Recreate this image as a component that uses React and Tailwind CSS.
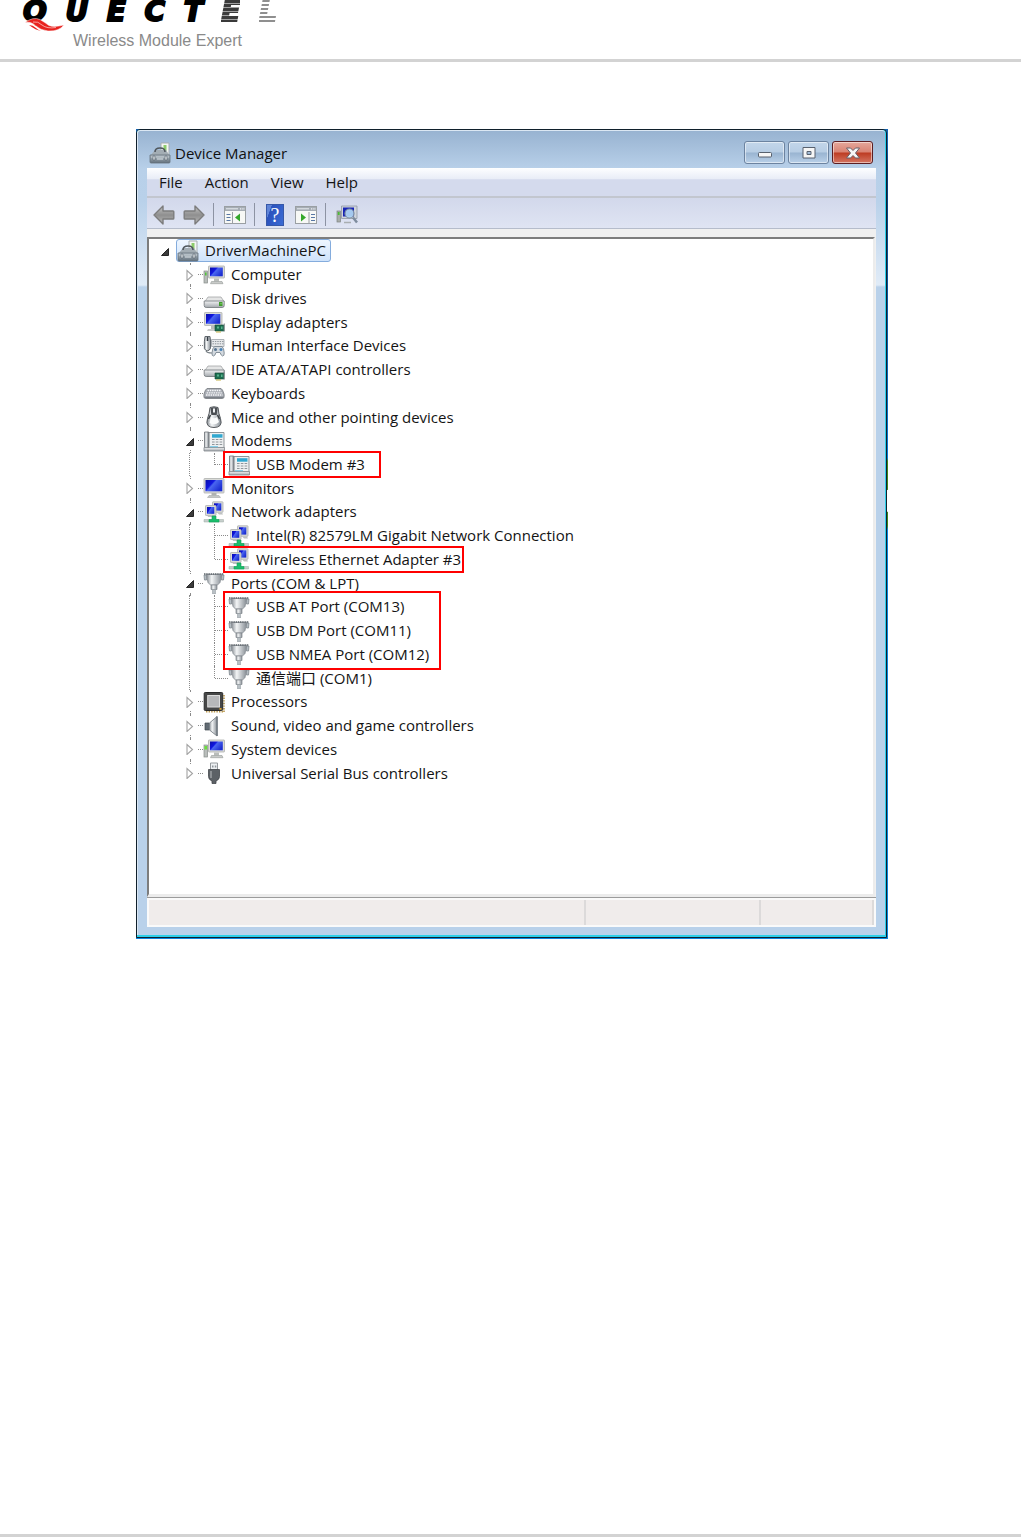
import React from "react";

const Svg = ({ children, className = "size-[22px]" }) => (
  <svg viewBox="0 0 22 22" className={`${className} shrink-0`} aria-hidden="true">
    {children}
  </svg>
);

/* Gradients that the icons share */
const Defs = () => (
  <svg className="absolute size-0" aria-hidden="true">
    <defs>
      <linearGradient id="screen" x1="0" y1="0" x2="1" y2="0.6">
        <stop offset="0" stopColor="#0a10a8" />
        <stop offset="0.4" stopColor="#1016e0" />
        <stop offset="0.5" stopColor="#4a66f0" />
        <stop offset="1" stopColor="#1c2ed2" />
      </linearGradient>
      <linearGradient id="metal" x1="0" y1="0" x2="0" y2="1">
        <stop offset="0" stopColor="#f2f3f4" />
        <stop offset="1" stopColor="#a3a8ad" />
      </linearGradient>
      <linearGradient id="steel" x1="0" y1="0" x2="1" y2="0">
        <stop offset="0" stopColor="#8b9197" />
        <stop offset="0.35" stopColor="#f3f5f6" />
        <stop offset="1" stopColor="#878e95" />
      </linearGradient>
      <linearGradient id="box" x1="0" y1="0" x2="0" y2="1">
        <stop offset="0" stopColor="#b4bec6" />
        <stop offset="1" stopColor="#63717c" />
      </linearGradient>
      <linearGradient id="arrow" x1="0" y1="0" x2="0" y2="1">
        <stop offset="0" stopColor="#c4c4c4" />
        <stop offset="0.5" stopColor="#8f8f8f" />
        <stop offset="1" stopColor="#b8b8b8" />
      </linearGradient>
    </defs>
  </svg>
);

const Toolbox = () => (
  <Svg>
    <path d="M12 1h8v12h-8z" fill="#f4f6f4" stroke="#a7adb0" />
    <path d="M14.5 3h3v6h-3z" fill="#8dcc6b" />
    <path d="M1 14l5-6h11l4 6z" fill="#a3adb4" />
    <path d="M6 10q0-4 5-4t5 4" fill="none" stroke="#50575d" strokeWidth="1.6" />
    <path d="M1 13h20v7q0 1-1 1H2q-1 0-1-1z" fill="url(#box)" stroke="#66727b" strokeWidth=".8" />
    <path d="M2 15h18" stroke="#c3ccd2" />
    <path d="M4 14h2v4H4zM16 14h2v4h-2z" fill="#dfe4e7" stroke="#59636b" strokeWidth=".6" />
    <path d="M8 17h6" stroke="#dbe2e6" />
  </Svg>
);

const Screen = ({ x = 6, y = 2, w = 15, h = 12 }) => (
  <g>
    <rect x={x} y={y} width={w} height={h} rx=".6" fill="#d9dbd8" stroke="#aeb0af" strokeWidth=".8" />
    <rect x={x + 1.5} y={y + 1.5} width={w - 3.2} height={h - 3.2} fill="url(#screen)" />
  </g>
);

const Computer = () => (
  <Svg>
    <rect x="1" y="7" width="3.6" height="12" fill="#b9bdbb" stroke="#888e8b" strokeWidth=".7" />
    <path d="M2 8.5h1.6v3H2z" fill="#54c33c" />
    <Screen x={5.5} y={2} w={16} h={12} />
    <path d="M11 14.5h5v3h-5z" fill="#babdba" />
    <path d="M8.5 17.5h10.5l1 2.2H7.5z" fill="#c9cbc9" stroke="#969b99" strokeWidth=".6" />
  </Svg>
);

const SystemDevice = () => (
  <Svg>
    <rect x="1" y="7" width="3.6" height="12" fill="#b9bdbb" stroke="#888e8b" strokeWidth=".7" />
    <path d="M1.5 8h2.6v3.5H1.5z" fill="#6be03c" />
    <Screen x={5.5} y={2} w={16} h={12} />
    <path d="M11 14.5h5v3h-5z" fill="#babdba" />
    <path d="M8.5 17.5h10.5l1 2.2H7.5z" fill="#c9cbc9" stroke="#969b99" strokeWidth=".6" />
  </Svg>
);

const DriveBody = () => (
  <g>
    <path d="M2 13.5L5 9h13l3 4.5z" fill="#e4e5e5" stroke="#a3a6a7" strokeWidth=".8" />
    <path d="M1.2 13h20v4.500q0 2-2 2h-16q-2 0-2-2z" fill="url(#metal)" stroke="#7b8083" strokeWidth=".9" />
  </g>
);
const Card = () => (
  <g>
    <path d="M12 14h9v6h-9z" fill="#1c6e50" stroke="#104833" strokeWidth=".6" />
    <path d="M14 15.5h2v2h-2zM18 15.5h1.5v2.5H18z" fill="#58b38c" />
    <path d="M13 21h5" stroke="#c8b44a" />
    <path d="M21.3 12.5v8" stroke="#8e9698" strokeWidth="1.2" />
  </g>
);
const Disk = () => (
  <Svg>
    <g transform="translate(0 1)">
      <DriveBody />
      <path d="M16 14h3.500v4H16z" fill="#3f9c2c" />
      <path d="M17.500 15.200h1v1h-1z" fill="#b6f09a" />
    </g>
  </Svg>
);
const Ide = () => (
  <Svg>
    <g transform="translate(0 -2)">
      <DriveBody />
    </g>
    <Card />
  </Svg>
);
const Display = () => (
  <Svg>
    <Screen x={1.5} y={1.5} w={17.5} h={13} />
    <path d="M8 15h5v3H8z" fill="#babdba" />
    <path d="M5 18h9v2H4z" fill="#c9cbc9" />
    <Card />
  </Svg>
);
const Hid = () => (
  <Svg>
    <path d="M8.5 4.5h12.5v7H8.5z" fill="#e6e8ea" stroke="#9ca2a8" strokeWidth=".8" />
    <path d="M9.5 6.5h11M9.5 8.8h11" stroke="#8d949b" strokeDasharray="1.4 1" />
    <path d="M2 1.5h5q1 5 .4 12-1 2.200-3 2.200T1.400 13.500Q1 6 2 1.500z" fill="url(#steel)" stroke="#5f666c" />
    <path d="M4.500 2v4" stroke="#333b44" strokeWidth="1.6" />
    <path d="M3 16q1 2 6 2" fill="none" stroke="#777e84" strokeWidth="1.200" />
    <path d="M11.500 11.500h7.500q2 1.500 2.200 6.500.2 3-1.600 3-1.300 0-2.600-3.500h-4q-1 3.500-2.600 3.500-1.700 0-1.400-3 .3-5 2.500-6.500z" fill="#d3d9df" stroke="#7d8891" strokeWidth=".9" />
    <circle cx="12.500" cy="14.500" r="1.500" fill="#56738e" />
    <circle cx="18" cy="14.500" r="1.500" fill="#4782b8" />
  </Svg>
);
const Keyboard = () => (
  <Svg>
    <path d="M4 6.500h14q1.500.5 3 5.500.5 4.500-1.500 4.500h-17Q.5 16.500 1 12 2.500 7 4 6.500z" fill="#a9adb4" stroke="#7d8187" strokeWidth=".9" />
    <path d="M4.500 8.500h13M3.700 10.800h15M3 13h16.500" stroke="#f7f8fa" strokeWidth="1.300" strokeDasharray="1.500 .8" />
    <path d="M1.500 15.300h19" stroke="#70757c" />
  </Svg>
);
const Mouse = () => (
  <Svg>
    <path d="M7 1.500q4-1.500 8 0 .5 6 2.500 11 1.500 5-.5 7-2 2-6 2t-6-2q-2-2-.5-7 2-5 2.500-11z" fill="url(#steel)" stroke="#55595d" />
    <path d="M7.500 2q3.500-1.300 7 0l-.8 7h-5.400z" fill="#4b4f54" />
    <path d="M10 2.500h2v4h-2z" fill="#f0f2f4" />
    <path d="M5.500 13q1-2 2-4M16.500 13q-1-2-2-4" stroke="#3e4246" strokeWidth="1.500" fill="none" />
    <path d="M8 11q3 2.500 6 0l2 5q-4 4-9.500 1z" fill="#fafbfb" />
  </Svg>
);
const Modem = () => (
  <Svg>
    <path d="M6 2.500h15V18H6z" fill="#eef0f1" stroke="#8f9599" />
    <path d="M1.500 2h4.200v16.500H1.500z" fill="url(#steel)" stroke="#6e7479" strokeWidth=".8" />
    <path d="M9 4.200h10.500v3.500H9z" fill="#31a8d0" />
    <path d="M9 9.500h11M9 12h11M9 14.500h11" stroke="#8f969b" strokeWidth="1.200" strokeDasharray="2.600 1.200" />
    <path d="M1 17.500h20.500V21H1z" fill="url(#metal)" stroke="#81878b" strokeWidth=".8" />
    <path d="M7 16.700h8" stroke="#6fc7e5" />
  </Svg>
);
const Monitor = () => (
  <Svg>
    <Screen x={1} y={1.5} w={20} h={14.5} />
    <path d="M8.500 16h5v2.500h-5z" fill="#aeb1b0" />
    <path d="M6 18.500h10l1.500 2h-13z" fill="#c3c6c5" stroke="#999e9c" strokeWidth=".5" />
  </Svg>
);
const Network = () => (
  <Svg>
    <Screen x={9.5} y={0.8} w={10.5} h={10.5} />
    <path d="M14 11.500h5l1 2h-4z" fill="#bfc2c1" />
    <Screen x={2.5} y={4.5} w={10.5} h={10} />
    <path d="M5.500 14.500h4l1 1.500h-6z" fill="#bfc2c1" />
    <path d="M1 18.500h19.500v2.500H1z" fill="#c6cfcc" stroke="#9fa9a5" strokeWidth=".5" />
    <path d="M9 15h4v3.500h3V21H6v-2.500h3z" fill="#1bbd6c" stroke="#12a359" strokeWidth=".6" />
  </Svg>
);
const Port = () => (
  <Svg>
    <path d="M1 3h2.500v5H1.500zM18.500 3H21l-.5 5h-2z" fill="#b4bcc2" stroke="#757e85" strokeWidth=".7" />
    <path d="M3.500 2.500h15l-1.500 8-2.500 2.500h-7L5 10.500z" fill="url(#steel)" stroke="#858c92" strokeWidth=".8" />
    <path d="M1 2h20" stroke="#5e656b" strokeWidth="1.500" strokeDasharray="1.500 .7" />
    <path d="M8 13h6v4.500H8z" fill="url(#steel)" stroke="#7e858b" strokeWidth=".7" />
    <path d="M9.500 17.500h3V22h-3z" fill="#b9c0c5" stroke="#8d959b" strokeWidth=".5" />
  </Svg>
);
const Processor = () => (
  <Svg>
    <path d="M3 20.800h18M21 4v17" stroke="#b9974d" strokeWidth="1.600" strokeDasharray="1.400 1.200" />
    <rect x="1.200" y="1.500" width="18.500" height="18" rx="1" fill="#464747" stroke="#292a2a" />
    <rect x="4.700" y="4.500" width="11.800" height="11.500" fill="#b7b8ba" stroke="#dddddd" />
    <path d="M16.500 17h2v1.800h-2z" fill="#e1a731" />
  </Svg>
);
const Sound = () => (
  <Svg>
    <path d="M2 8h4.500v7H2z" fill="#626b73" stroke="#40484f" strokeWidth=".7" />
    <path d="M6.500 8L14 1.500v19.500L6.500 15z" fill="url(#steel)" stroke="#798188" strokeWidth=".9" />
    <path d="M14 1.500v19.500" stroke="#737c83" strokeWidth="1.600" />
  </Svg>
);
const Usb = () => (
  <Svg>
    <path d="M7.500 1h7v7h-7z" fill="#edf0f2" stroke="#959a9e" />
    <path d="M9 3.500h1.500v2H9zM11.800 3.500h1.500v2h-1.500z" fill="#8e949a" />
    <path d="M5.500 7.500h11v7q0 3-3.500 4.500v2.500H9V19q-3.500-1.500-3.500-4.500z" fill="#5c6166" stroke="#44484c" strokeWidth=".8" />
    <path d="M8 9v7" stroke="#9ca1a5" strokeWidth="1.500" />
  </Svg>
);

const Arrow = ({ flip }) => (
  <Svg>
    <path
      d={flip ? "M21 11L12 2v5H2q-.8 0-.8.8v6.400q0 .8.8.8h10v5z" : "M1 11L10 2v5H20q.8 0 .8.8v6.400q0 .8-.8.8H10v5z"}
      fill="url(#arrow)"
      stroke="#7c7c7c"
      strokeWidth="1.400"
      strokeLinejoin="round"
    />
  </Svg>
);
const Pane = ({ right }) => (
  <Svg>
    <rect x=".5" y="2.500" width="21" height="17" fill="#f7f8f6" stroke="#9a9fa3" />
    <path d="M1 3h20v4H1z" fill="#a6adb5" />
    <path d="M2 4.800h12" stroke="#e8ebef" />
    <path d="M16 4.800h5" stroke="#eef0f3" strokeWidth="1.300" strokeDasharray="1.300 1" />
    {right ? (
      <g>
        <path d="M14 8v11" stroke="#9a9fa3" />
        <path d="M16 10.500h4M16 13.500h4M16 16.500h4" stroke="#5877a5" strokeWidth="1.200" />
        <path d="M6 9.500l5 4-5 4z" fill="#35a82b" />
      </g>
    ) : (
      <g>
        <path d="M8.500 8v11" stroke="#9a9fa3" />
        <path d="M2.500 10.500h4M2.500 13.500h4M2.500 16.500h4" stroke="#5877a5" strokeWidth="1.200" />
        <path d="M16 9.500l-5 4 5 4z" fill="#35a82b" />
      </g>
    )}
  </Svg>
);
const Scan = () => (
  <Svg>
    <rect x="1" y="7" width="3.500" height="11" fill="#a8adaa" stroke="#7e8582" strokeWidth=".7" />
    <path d="M1.800 8h1.800v3H1.800z" fill="#4bbb36" />
    <path d="M5.500 2h15.500v12.500H5.500z" fill="#cfd4dc" stroke="#9098a3" strokeWidth=".8" />
    <path d="M7 3.500h11v9H7z" fill="#1724b5" />
    <path d="M8 18.500h7" stroke="#a9aeb0" strokeWidth="1.500" />
    <circle cx="13.500" cy="9.500" r="4.500" fill="#b5dcf6" fillOpacity=".9" stroke="#7d8ea3" strokeWidth="1.200" />
    <path d="M17 13.500l4 5" stroke="#7e8c9d" strokeWidth="2.500" />
  </Svg>
);

const rows = [
  { label: "Computer", Icon: Computer },
  { label: "Disk drives", Icon: Disk },
  { label: "Display adapters", Icon: Display },
  { label: "Human Interface Devices", Icon: Hid },
  { label: "IDE ATA/ATAPI controllers", Icon: Ide },
  { label: "Keyboards", Icon: Keyboard },
  { label: "Mice and other pointing devices", Icon: Mouse },
  { label: "Modems", Icon: Modem, open: true },
  { label: "USB Modem #3", Icon: Modem, child: true, last: true, mark: "-inset-y-[2px] w-[158px]" },
  { label: "Monitors", Icon: Monitor },
  { label: "Network adapters", Icon: Network, open: true },
  { label: "Intel(R) 82579LM Gigabit Network Connection", Icon: Network, child: true },
  { label: "Wireless Ethernet Adapter #3", Icon: Network, child: true, last: true, mark: "-inset-y-[2px] w-[241px]" },
  { label: "Ports (COM & LPT)", Icon: Port, open: true },
  { label: "USB AT Port (COM13)", Icon: Port, child: true, mark: "-top-[4px] h-[79px] w-[218px]" },
  { label: "USB DM Port (COM11)", Icon: Port, child: true },
  { label: "USB NMEA Port (COM12)", Icon: Port, child: true },
  { label: "通信端口 (COM1)", Icon: Port, child: true, last: true },
  { label: "Processors", Icon: Processor },
  { label: "Sound, video and game controllers", Icon: Sound },
  { label: "System devices", Icon: SystemDevice },
  { label: "Universal Serial Bus controllers", Icon: Usb, end: true },
];

const Expander = ({ open, label }) => (
  <button type="button" aria-label={`${open ? "Collapse" : "Expand"} ${label}`} className="flex h-[19px] w-3 shrink-0 items-center justify-center bg-white">
    <svg viewBox="0 0 12 12" className="size-3" aria-hidden="true">
      {open ? (
        <path d="M9.500 3.500v7h-7z" fill="#3c3c3c" stroke="#262626" />
      ) : (
        <path d="M3 1.500v10l5.500-5z" fill="#fff" stroke="#a3a3a3" strokeWidth="1.100" />
      )}
    </svg>
  </button>
);

/* Guide column: a dotted vertical line with an optional dotted branch */
const Guide = ({ half, branch }) => (
  <span className="flex w-[25px] shrink-0 self-stretch pl-[11px]">
    <span className={`${half ? "h-1/2" : "h-full"} border-l border-dotted border-[#8a8a8a]`} />
    {branch && <span className="h-0 flex-1 self-center border-t border-dotted border-[#8a8a8a]" />}
  </span>
);

const TreeRow = ({ label, Icon, open, child, last, mark, end }) => (
  <li role="treeitem" aria-level={child ? 3 : 2} className="relative flex items-center pl-[29px]">
    {child ? (
      <>
        <Guide />
        <Guide half={last} branch />
      </>
    ) : (
      <span className="flex w-[25px] shrink-0 self-stretch pl-[6px]">
        <span className="flex w-3 flex-col items-center">
          <span className="flex-1 border-l border-dotted border-[#8a8a8a]" />
          <Expander open={open} label={label} />
          <span className={`flex-1 border-l border-dotted ${end ? "border-white" : "border-[#8a8a8a]"}`} />
        </span>
        <span className="ml-[2px] flex-1 self-center border-t border-dotted border-[#8a8a8a]" />
      </span>
    )}
    <Icon />
    <span className="pb-px pl-[6px] whitespace-nowrap">{label}</span>
    {mark && <span className={`pointer-events-none absolute left-[74px] z-10 border-2 border-[#ff0000] ${mark}`} />}
  </li>
);

const CaptionButton = ({ label, close, children }) => (
  <button
    type="button"
    aria-label={label}
    className={`flex h-[23px] w-[41px] items-center justify-center rounded-[3px] border shadow-[inset_0_0_0_1px_rgba(255,255,255,0.5)] ${
      close
        ? "border-[#5c1e22] bg-[linear-gradient(#e5a79b_0%,#d98373_48%,#bd3b22_52%,#d47562_100%)]"
        : "border-[#6c83a0] bg-[linear-gradient(#c3d6ea_0%,#b7cde4_48%,#99b4d1_52%,#b9d0e8_100%)]"
    }`}
  >
    <svg viewBox="0 0 16 14" className="h-[14px] w-4" aria-hidden="true">
      {children}
    </svg>
  </button>
);

const Letter = ({ children, className = "text-black [-webkit-text-stroke:2px_#000]" }) => <span className={className}>{children}</span>;

const Header = () => (
  <header className="h-[62px] shrink-0 border-b-[3px] border-[#d3d3d3] pl-[23px]">
    <div className="flex h-[22px] w-[254px] justify-between font-['DejaVu_Sans'] text-[28px] leading-[23px] font-bold italic">
      <Letter>Q</Letter>
      <Letter>U</Letter>
      <Letter>E</Letter>
      <Letter>C</Letter>
      <Letter>T</Letter>
      <Letter className="bg-[repeating-linear-gradient(#3a3a3a_0_3px,#a0a0a0_3px_4px)] bg-clip-text text-transparent [-webkit-text-stroke:2px_transparent]">E</Letter>
      <Letter className="bg-[repeating-linear-gradient(#8f8f8f_0_2px,#ffffff_2px_4px)] bg-clip-text text-transparent [-webkit-text-stroke:2px_transparent]">L</Letter>
    </div>
    <svg viewBox="0 0 40 14" className="relative -mt-1 ml-[2px] h-[14px] w-10" aria-hidden="true">
      <path d="M0 4.500Q8-1.500 15 1.500q5 3 9 6 5 2 15-.5-5 6.500-16 6Q15 12 11 8 6 3 0 4.500z" fill="#e8211d" stroke="#fff" strokeWidth=".5" />
      <path d="M4 7q4 0 7 3 2 2 5 2.500Q11 12.500 4 7z" fill="#e8211d" />
      <path d="M8 4q5-1 9 3 5 4 14 2.500" fill="none" stroke="#ffd9d6" strokeWidth=".7" />
    </svg>
    <p className="pl-[50px] font-['Liberation_Sans'] text-base leading-[18px] text-[#8a8a8a]">Wireless Module Expert</p>
  </header>
);

const Separator = () => <span className="mx-2 h-[23px] w-px shrink-0 bg-[#8d93a3]" />;

const DeviceManager = () => (
  <section
    aria-label="Device Manager"
    className="mt-[67px] mr-[133px] ml-[136px] bg-[linear-gradient(#1464b4_0_2%,#0a3c78_5%,#0a78d8_40.600%,#3f8618_41%_44.500%,#fff_44.600%_47.200%,#3f8618_47.300%_49%,#0a84e0_49.500%_100%)] pr-px pb-px"
  >
    <div className="rounded-t-[4px] border border-[#10202c] bg-[#2ccfe8] pr-px pb-[2px]">
      <div className="rounded-t-[3px] border-t border-l border-[#dbe7f3] bg-[linear-gradient(#98b3d1_0,#b8d0e9_38px,#b9d1ea_70px,#e0ebf7_154px,#b9d1ea_156px)] px-[9px] pb-2">
        <div className="flex h-[37px] items-center pt-[6px] pr-[3px] pl-[2px]">
          <Toolbox />
          <h1 className="flex-1 pl-1 text-[15px] leading-5 font-normal text-[#111]">Device Manager</h1>
          <div className="flex gap-[3px]">
            <CaptionButton label="Minimize">
              <rect x="1.500" y="6.500" width="13" height="4.500" rx="1" fill="#f6f6f6" stroke="#58616e" />
            </CaptionButton>
            <CaptionButton label="Maximize">
              <path d="M2 1.500h12v10.500H2zM6 5.500v3h4v-3z" fillRule="evenodd" fill="#f6f6f6" stroke="#58616e" />
            </CaptionButton>
            <CaptionButton label="Close" close>
              <path d="M1.500 2h4L8 4.500 10.500 2h4L10.500 7l4 5h-4L8 9.500 5.500 12h-4l4-5z" fill="#f6f6f6" stroke="#68606a" strokeLinejoin="round" />
            </CaptionButton>
          </div>
        </div>
        <div className="bg-[#f0f0f0]">
          <nav className="flex h-[30px] items-center gap-[22px] border-b-2 border-[#c2c6cf] bg-[linear-gradient(#fdfeff_0%,#e9edf7_38%,#d4daed_42%,#d4daed_100%)] px-3">
            {["File", "Action", "View", "Help"].map((m) => (
              <button key={m} type="button">
                {m}
              </button>
            ))}
          </nav>
          <div className="flex h-[31px] items-center border-b border-[#b5bccb] bg-[linear-gradient(#d2d8eb,#dfe4f3)] pt-[3px] pl-[6px]" role="toolbar" aria-label="Tools">
            <button type="button" aria-label="Back"><Arrow /></button>
            <button type="button" aria-label="Forward" className="ml-2"><Arrow flip /></button>
            <Separator />
            <button type="button" aria-label="Show console tree" className="ml-[2px]"><Pane /></button>
            <Separator />
            <button
              type="button"
              aria-label="Help"
              className="mx-[3px] flex h-[22px] w-[18px] items-center justify-center border border-[#3758a8] bg-[linear-gradient(110deg,#5f84d8_0_20%,#2b52bd_22%,#3b6bd4)] font-['Liberation_Serif'] text-[20px] leading-5 text-white"
            >
              ?
            </button>
            <button type="button" aria-label="Show action pane" className="ml-2"><Pane right /></button>
            <Separator />
            <button type="button" aria-label="Scan for hardware changes" className="ml-[2px]"><Scan /></button>
          </div>
          <div className="mt-[8px] mr-px border-t-2 border-r-2 border-b-[3px] border-l-2 border-t-[#7d7d7d] border-r-[#ececec] border-b-[#ececec] border-l-[#7d7d7d] bg-white">
            <ul role="tree" aria-label="Devices" className="mb-[109px] grid h-[546px] auto-rows-fr text-[#141414]">
              <li role="treeitem" aria-level={1} className="flex items-center pl-[10px]">
                <Expander open label="DriverMachinePC" />
                <span className="ml-[5px] flex h-[23px] items-center rounded-[3px] border border-[#84acdd] bg-[linear-gradient(#eef6ff,#cfe3fb)] pr-1">
                  <Toolbox />
                  <span className="pb-px pl-[6px]">DriverMachinePC</span>
                </span>
              </li>
              {rows.map((r) => (
                <TreeRow key={r.label} {...r} />
              ))}
            </ul>
          </div>
          <footer className="flex h-[30px] border-t border-[#9c9c9c] bg-[#f0eceb] pr-[2px] shadow-[inset_0_0_0_2px_#fafafa]">
            <span className="my-[2px] flex-1 border-r-2 border-[#dcdada]" />
            <span className="my-[2px] w-[175px] border-r-2 border-[#dcdada]" />
            <span className="my-[2px] w-[113px] border-r-2 border-[#dcdada]" />
          </footer>
        </div>
      </div>
    </div>
  </section>
);

export default function App() {
  return (
    <div className="flex min-h-screen flex-col bg-white font-['Open_Sans','Noto_Sans_CJK_SC',sans-serif] text-[15px] leading-5 text-[#141414]">
      <Defs />
      <Header />
      <main>
        <DeviceManager />
      </main>
      <div className="mt-auto h-[3px] bg-[#d3d3d3]" />
    </div>
  );
}
